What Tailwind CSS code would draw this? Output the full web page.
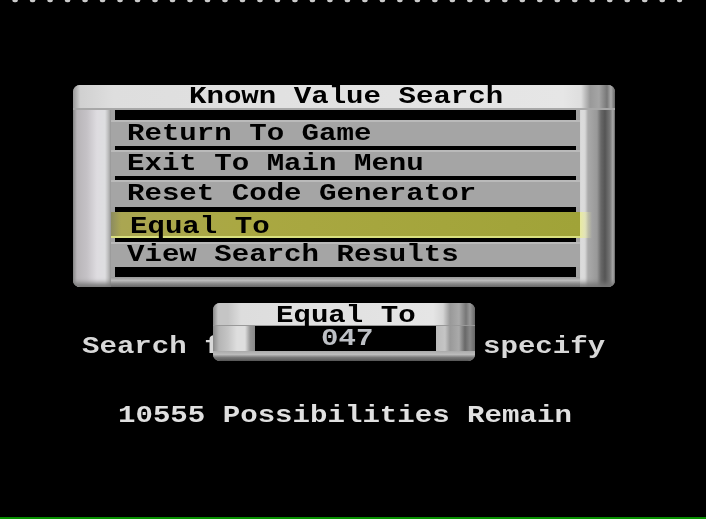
<!DOCTYPE html>
<html lang="en"><head><meta charset="utf-8"><title>Known Value Search</title>
<script src="https://cdn.jsdelivr.net/npm/@tailwindcss/browser@4"></script></head>
<body class="bg-black overflow-hidden">
<main class="relative w-[706px] h-[519px] bg-black overflow-hidden flex flex-col font-['Liberation_Mono',monospace] font-bold text-[24px] leading-[26px] whitespace-pre text-black">
<svg class="block w-[706px] h-[4px] shrink-0 blur-[0.5px]" viewBox="0 0 706 4"><line x1="14.5" y1="0" x2="680" y2="0" stroke="#cbcbcb" stroke-width="4.5" stroke-linecap="round" stroke-dasharray="1.2 16.29"/></svg>
<section class="ml-[73px] mt-[81px] w-[542px] h-[202px] shrink-0 rounded-[7px] overflow-hidden flex flex-col bg-[#b5b5b5]">
  <header class="h-[25px] shrink-0 border-b-2 border-[#a8a8a8] bg-[linear-gradient(90deg,#999_0px,#d0d0d0_7px,#dedede_40px,#e6e6e6_490px,#dedede_508px,#999_517px,#a5a5a5_526px,#777_534px,#aaa_538px,#666_542px)] pl-[116px]"><div class="blur-[0.4px] mt-[2px] leading-[20px] origin-left scale-x-[1.212] w-max">Known Value Search</div></header>
  <div class="flex h-[177px]">
    <div class="w-[38px] shrink-0 bg-[linear-gradient(90deg,#888_0px,#b8b5b8_4px,#c5c2c6_14px,#dedce0_24px,#dedee0_32px,#b5b5b5_36px,#999_38px)] shadow-[inset_0_-7px_5px_-3px_#777]"></div>
    <div class="w-[469px] flex flex-col bg-[#a2a2a2]">
      <div class="h-[10px] bg-black ml-[4px] mr-[4px]"></div>
      <div class="h-[26px] border-t-2 border-[#bababa] bg-[#a5a5a5] pl-[16px]"><div class="blur-[0.4px] -mt-[1px] origin-left scale-x-[1.212] w-max">Return To Game</div></div>
      <div class="h-[4px] bg-black ml-[4px] mr-[4px]"></div>
      <div class="h-[26px] border-t-2 border-[#bababa] bg-[#a5a5a5] pl-[16px]"><div class="blur-[0.4px] -mt-px origin-left scale-x-[1.212] w-max">Exit To Main Menu</div></div>
      <div class="h-[4px] bg-black ml-[4px] mr-[4px]"></div>
      <div class="h-[27px] border-t-2 border-[#bababa] bg-[#a5a5a5] pl-[16px]"><div class="blur-[0.4px] -mt-px origin-left scale-x-[1.212] w-max">Reset Code Generator</div></div>
      <div class="h-[5px] bg-black ml-[4px] mr-[4px]"></div>
      <div class="h-[26px] border-b-2 border-b-[#d9e080] bg-[linear-gradient(90deg,#8c8c60_0px,#aaa652_10px,#aaa842_130px,#a0a338_469px)] pl-[19px]"><div class="blur-[0.4px] mt-[4px] leading-[22px] origin-left scale-x-[1.212] w-max">Equal To</div></div>
      <div class="h-[4px] bg-black ml-[4px] mr-[4px]"></div>
      <div class="h-[25px] border-t-2 border-[#bababa] bg-[#a5a5a5] pl-[16px]"><div class="blur-[0.4px] -mt-[2px] origin-left scale-x-[1.212] w-max">View Search Results</div></div>
      <div class="h-[10px] bg-black ml-[4px] mr-[4px]"></div>
      <div class="h-[10px] bg-[linear-gradient(#999,#bababa_35%,#8c8c8c_65%,#666)]"></div>
    </div>
    <div class="w-[35px] bg-[linear-gradient(90deg,#e1e1e1_0px,#d8d8d8_5px,#aaa_8px,#999_17px,#686868_21px,#555_25px,#777_30px,#aaa_33px,#666_35px)] shadow-[inset_0_-7px_5px_-3px_#777] pt-[102px]"><div class="h-[26px] w-[12px] bg-linear-to-r from-[#e8eaa0] to-transparent"></div></div>
  </div>
</section>
<div class="flex mt-[47px] ml-[82px] text-[#d8d8d8] blur-[0.5px]"><div class="w-[401px]"><div class="origin-left scale-x-[1.212] w-max">Search f</div></div><div class="origin-left scale-x-[1.212] w-max">specify</div></div>
<div class="mt-[43px] ml-[117.5px] text-[#e0e0e0] blur-[0.5px] origin-left scale-x-[1.212] w-max">10555 Possibilities Remain</div>
<div class="mt-auto h-[2px] shrink-0 bg-[#079000]"></div>
<section class="absolute left-[213px] top-[303px] w-[262px] h-[58px] rounded-[7px] overflow-hidden bg-[#b5b5b5] flex flex-col">
  <header class="h-[23px] shrink-0 border-b border-[#999] bg-[linear-gradient(90deg,#888_0px,#c5c5c5_5px,#c5c5c5_15px,#ddd_28px,#e5e5e5_220px,#d5d5d5_230px,#999_237px,#aaa_246px,#777_253px,#999_257px,#666_262px)] pl-[63px]"><div class="blur-[0.4px] mt-[3px] leading-[20px] origin-left scale-x-[1.212] w-max">Equal To</div></header>
  <div class="flex h-[25px] shrink-0">
    <div class="w-[42px] bg-[linear-gradient(90deg,#888_0px,#b5b5b5_6px,#c5c5c5_15px,#dedede_24px,#dedede_32px,#999_37px,#888_42px)]"></div>
    <div class="w-[181px] bg-black text-[#bdc0c5] pl-[66px]"><div class="blur-[0.5px] mt-[3px] leading-[20px] origin-left scale-x-[1.212] w-max">047</div></div>
    <div class="w-[39px] bg-[linear-gradient(90deg,#bbb_0px,#c5c5c5_9px,#999_14px,#aaa_23px,#686868_29px,#888_34px,#666_39px)]"></div>
  </div>
  <div class="h-[10px] bg-[linear-gradient(#aaa,#bbb_35%,#777_65%,#555)]"></div>
</section>
</main></body></html>
